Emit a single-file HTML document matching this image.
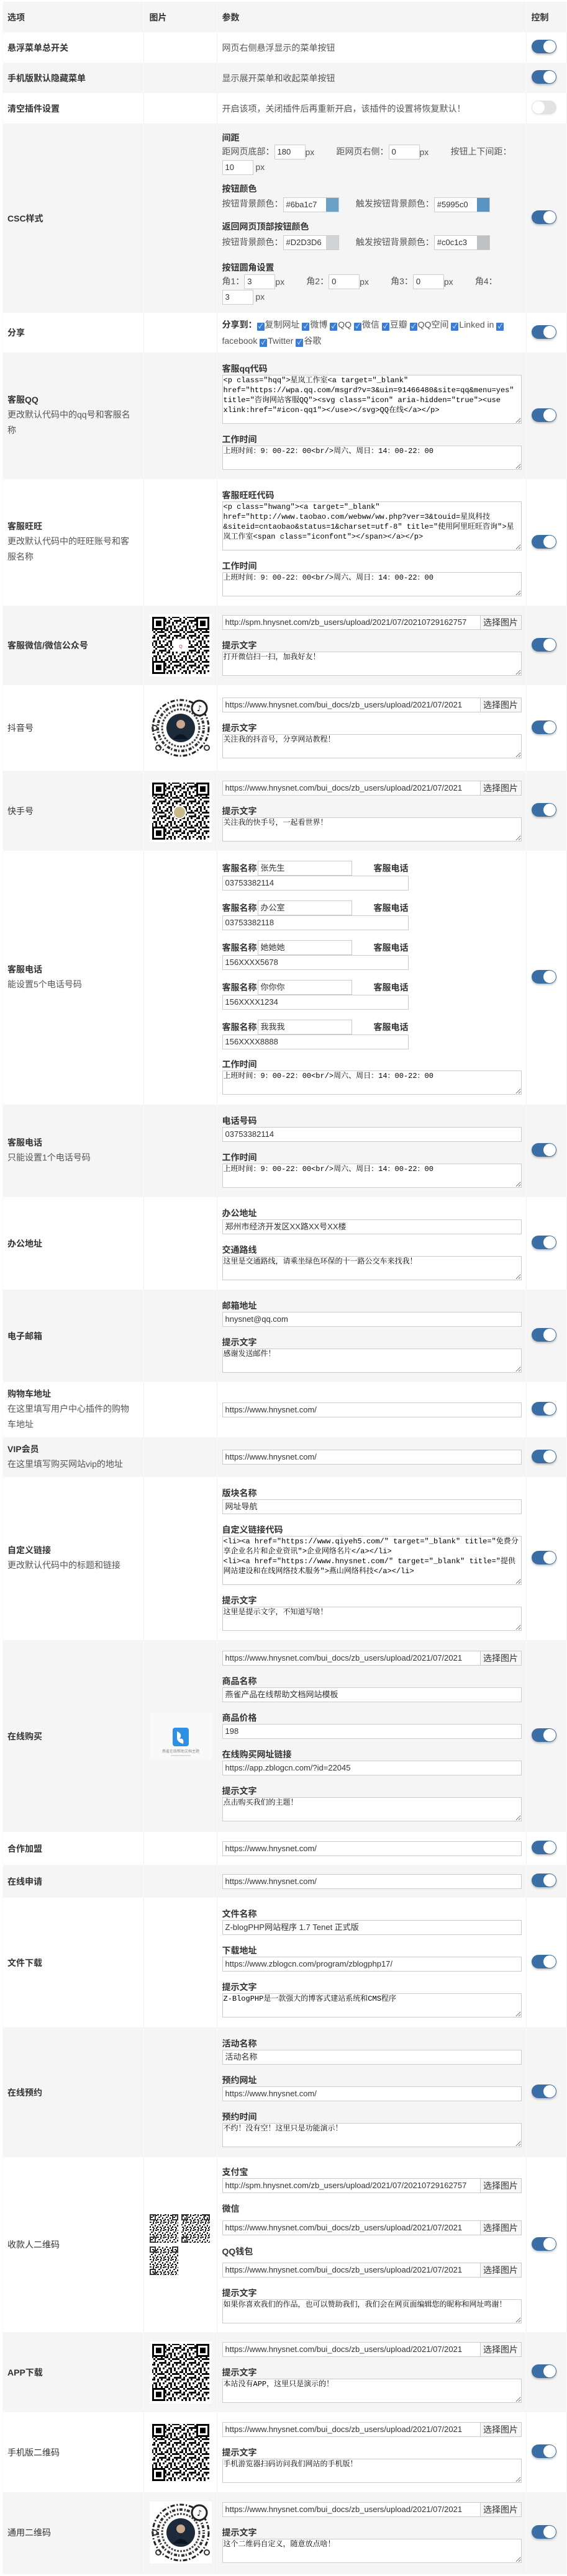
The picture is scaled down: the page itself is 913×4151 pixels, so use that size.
<!DOCTYPE html>
<html><head><meta charset="utf-8">
<style>
*{box-sizing:border-box}
body{margin:0;width:913px;height:4151px;background:#fff;font-family:"Liberation Sans","Noto Sans CJK SC",sans-serif;font-size:14px;color:#555;position:relative}
table{position:absolute;left:5px;top:3px;width:907px;border-collapse:collapse;table-layout:fixed;box-shadow:0 1px 2px rgba(0,0,0,.08)}
td,th{vertical-align:middle;padding:0;border-right:1px solid #f0f0f0}
tr.g td,tr.g th{background:#f5f5f5;border-right-color:#fafafa}
th{text-align:left;font-weight:bold;color:#333;font-size:14px}
td.l{padding:0 14px 0 7px;color:#333}
th.l{padding-left:7px}
td.i,th.i{padding-left:9px}
td.p,th.p{padding:0 7px 0 8px}
td.c,th.c{padding-left:8px}
.t{font-weight:bold;color:#333;line-height:20px}
.d{color:#555;line-height:25px;margin-top:2px}
.h{font-weight:bold;color:#333;line-height:20px;height:20px}
.grp{margin-bottom:15px}
.grp:last-child{margin-bottom:0}
input.f,.f{display:block;width:100%;height:24px;border:1px solid #ccc;padding:0 4px;font:13px "Liberation Sans","Noto Sans CJK SC",sans-serif;color:#333;background:#fff;line-height:22px;white-space:nowrap;overflow:hidden}
textarea{display:block;width:100%;height:39px;border:1px solid #ccc;padding:0 1px;font:12px/16px "Liberation Mono","Noto Serif CJK SC",monospace;color:#000;background:#fff;resize:vertical;overflow:hidden}
textarea.big{height:79px}
.up{display:flex;height:24px}
.up .f{flex:1;border-right:none}
.up .b{width:67px;height:24px;border:1px solid #ccc;background:#f7f7f7;color:#333;font-size:14px;line-height:22px;text-align:center}
.sw{display:inline-block;width:40px;height:22px;border-radius:11px;background:#3a6ea5;position:relative;box-shadow:0 2px 3px rgba(0,0,0,.25)}
.sw::after{content:"";position:absolute;right:1px;top:1px;width:20px;height:20px;border-radius:50%;background:#fff}
.sw.off{background:#e2e2e2;box-shadow:0 1px 2px rgba(0,0,0,.1)}
.sw.off::after{right:auto;left:1px}
.ln{line-height:24px;white-space:nowrap}
.si{display:inline-block;vertical-align:middle;width:50px;height:24px;border:1px solid #ccc;background:#fff;font-size:13px;color:#333;padding:0 4px;line-height:22px}
.px{display:inline-block;width:50px;vertical-align:middle}
.ci{display:inline-block;vertical-align:middle;width:90px;height:24px;border:1px solid #ccc;background:#fff;font-size:13px;color:#333;padding:0 4px;line-height:22px;position:relative}
.ci i{position:absolute;right:0;top:0;width:20px;height:22px}
.cb{display:inline-block;width:12px;height:13px;background:#3a7bd5;color:#fff;font-size:10px;line-height:13px;text-align:center;border-radius:1px;vertical-align:-1px;margin-right:1px}
.ph{width:300px;margin-bottom:16px}
.ph .r{display:flex;height:24px;align-items:center}
.ph .r b{color:#333;width:57px}
.ph .r span.n{width:152px;height:24px;border:1px solid #ccc;background:#fff;font-size:13px;color:#333;padding:0 4px;line-height:22px}
.ph .r b.e{width:auto;margin-left:auto}
.img{background:#fff;display:block}
</style></head><body>
<svg width="0" height="0" style="position:absolute"><defs>
<pattern id="q" width="24" height="24" patternUnits="userSpaceOnUse"><path d="M0 0h6v3H0zM9 0h3v3H9zM18 0h3v6h-3zM6 3h3v3H6zM12 3h6v3h-6zM21 3h3v3h-3zM0 6h3v6H0zM9 6h3v3H9zM15 9h6v3h-6zM3 12h6v3H3zM12 12h3v6h-3zM18 12h3v3h-3zM0 15h3v3H0zM6 18h6v3H6zM15 18h3v6h-3zM21 18h3v3h-3zM3 21h3v3H3zM9 21h3v3H9zM6 9h3v3H6zM21 9h3v3h-3z" fill="#111"/></pattern>
<pattern id="qs" width="12" height="12" patternUnits="userSpaceOnUse"><path d="M0 0h3v2H0zM5 0h2v4H5zM9 1h3v2H9zM2 4h3v2H2zM8 5h2v3H8zM0 7h2v3H0zM4 8h3v2H4zM10 9h2v3h-2zM6 10h2v2H6z" fill="#222"/></pattern>
</defs></svg>
<table>
<colgroup><col style="width:226px"><col style="width:118px"><col style="width:498px"><col style="width:65px"></colgroup>
<tr class="g" style="height:49px"><th class="l">选项</th><th class="i">图片</th><th class="p">参数</th><th class="c">控制</th></tr>
<tr style="height:49px"><td class="l"><div class="t">悬浮菜单总开关</div></td><td class="i"></td><td class="p">网页右侧悬浮显示的菜单按钮</td><td class="c"><span class="sw"></span></td></tr>
<tr class="g" style="height:49px"><td class="l"><div class="t">手机版默认隐藏菜单</div></td><td class="i"></td><td class="p">显示展开菜单和收起菜单按钮</td><td class="c"><span class="sw"></span></td></tr>
<tr style="height:49px"><td class="l"><div class="t">清空插件设置</div></td><td class="i"></td><td class="p">开启该项，关闭插件后再重新开启，该插件的设置将恢复默认！</td><td class="c"><span class="sw off"></span></td></tr>
<tr class="g" style="height:305px"><td class="l"><div class="t">CSC样式</div></td><td class="i"></td><td class="p">
<div class="grp" style="margin-bottom:12px"><div class="h">间距</div>
<div class="ln">距网页底部：<span class="si">180</span><span class="px"> px</span>距网页右侧：<span class="si">0</span><span class="px"> px</span>按钮上下间距：</div>
<div class="ln"><span class="si">10</span> px</div></div>
<div class="grp" style="margin-bottom:13px"><div class="h">按钮颜色</div>
<div class="ln" style="margin-top:2px">按钮背景颜色：<span class="ci">#6ba1c7<i style="background:#6ba1c7"></i></span>&nbsp;&nbsp;&nbsp;&nbsp;&nbsp;&nbsp;&nbsp;触发按钮背景颜色：<span class="ci">#5995c0<i style="background:#5995c0"></i></span></div></div>
<div class="grp" style="margin-bottom:18px"><div class="h">返回网页顶部按钮颜色</div>
<div class="ln" style="margin-top:3px">按钮背景颜色：<span class="ci">#D2D3D6<i style="background:#D2D3D6"></i></span>&nbsp;&nbsp;&nbsp;&nbsp;&nbsp;&nbsp;&nbsp;触发按钮背景颜色：<span class="ci">#c0c1c3<i style="background:#c0c1c3"></i></span></div></div>
<div class="grp"><div class="h">按钮圆角设置</div>
<div class="ln">角1：<span class="si">3</span><span class="px"> px</span>角2：<span class="si">0</span><span class="px"> px</span>角3：<span class="si">0</span><span class="px"> px</span>角4：</div>
<div class="ln"><span class="si">3</span> px</div></div>
</td><td class="c"><span class="sw"></span></td></tr>
<tr style="height:64px"><td class="l"><div class="t">分享</div></td><td class="i"></td><td class="p" style="line-height:26px"><b style="color:#333">分享到：</b><span class="cb">✓</span>复制网址 <span class="cb">✓</span>微博 <span class="cb">✓</span>QQ <span class="cb">✓</span>微信 <span class="cb">✓</span>豆瓣 <span class="cb">✓</span>QQ空间 <span class="cb">✓</span>Linked in <span class="cb">✓</span><br>facebook <span class="cb">✓</span>Twitter <span class="cb">✓</span>谷歌</td><td class="c"><span class="sw"></span></td></tr>
<tr class="g" style="height:204px"><td class="l"><div class="t">客服QQ</div><div class="d">更改默认代码中的qq号和客服名称</div></td><td class="i"></td><td class="p">
<div class="grp"><div class="h">客服qq代码</div><textarea class="big">&lt;p class="hqq"&gt;星岚工作室&lt;a target="_blank" href="https://wpa.qq.com/msgrd?v=3&amp;uin=91466480&amp;site=qq&amp;menu=yes" title="咨询网站客服QQ"&gt;&lt;svg class="icon" aria-hidden="true"&gt;&lt;use xlink:href="#icon-qq1"&gt;&lt;/use&gt;&lt;/svg&gt;QQ在线&lt;/a&gt;&lt;/p&gt;</textarea></div>
<div class="grp"><div class="h">工作时间</div><textarea>上班时间：9：00-22：00&lt;br/&gt;周六、周日：14：00-22：00</textarea></div>
</td><td class="c"><span class="sw"></span></td></tr>
<tr style="height:204px"><td class="l"><div class="t">客服旺旺</div><div class="d">更改默认代码中的旺旺账号和客服名称</div></td><td class="i"></td><td class="p">
<div class="grp"><div class="h">客服旺旺代码</div><textarea class="big">&lt;p class="hwang"&gt;&lt;a target="_blank" href="http://www.taobao.com/webww/ww.php?ver=3&amp;touid=星岚科技&amp;siteid=cntaobao&amp;status=1&amp;charset=utf-8" title="使用阿里旺旺咨询"&gt;星岚工作室&lt;span class="iconfont"&gt;&lt;/span&gt;&lt;/a&gt;&lt;/p&gt;</textarea></div>
<div class="grp"><div class="h">工作时间</div><textarea>上班时间：9：00-22：00&lt;br/&gt;周六、周日：14：00-22：00</textarea></div>
</td><td class="c"><span class="sw"></span></td></tr>
<tr class="g" style="height:128px"><td class="l"><div class="t">客服微信/微信公众号</div></td><td class="i">
<svg class="img" width="100" height="100"><rect width="100" height="100" fill="#fff"/><rect x="4" y="4" width="92" height="92" fill="url(#q)"/><g><rect x="4" y="4" width="21" height="21"/><rect x="7" y="7" width="15" height="15" fill="#fff"/><rect x="10" y="10" width="9" height="9"/><rect x="75" y="4" width="21" height="21"/><rect x="78" y="7" width="15" height="15" fill="#fff"/><rect x="81" y="10" width="9" height="9"/><rect x="4" y="75" width="21" height="21"/><rect x="7" y="78" width="15" height="15" fill="#fff"/><rect x="10" y="81" width="9" height="9"/></g><rect x="38" y="40" width="24" height="20" fill="#fff"/><text x="50" y="54" font-size="7" text-anchor="middle" fill="#c33" font-family="Liberation Sans">Q</text></svg>
</td><td class="p">
<div class="grp"><div class="up"><span class="f">http://spm.hnysnet.com/zb_users/upload/2021/07/20210729162757</span><span class="b">选择图片</span></div></div>
<div class="grp"><div class="h">提示文字</div><textarea>打开微信扫一扫，加我好友！</textarea></div>
</td><td class="c"><span class="sw"></span></td></tr>
<tr style="height:138px"><td class="l"><div class="t" style="font-weight:normal">抖音号</div></td><td class="i">
<svg class="img" width="100" height="100"><rect width="100" height="100" fill="#fff"/><circle cx="50" cy="50" r="45" fill="none" stroke="#222" stroke-width="3" stroke-dasharray="7 3 2 3"/><circle cx="50" cy="50" r="37" fill="none" stroke="#333" stroke-width="4" stroke-dasharray="2 2 5 3"/><circle cx="50" cy="50" r="30" fill="none" stroke="#444" stroke-width="3" stroke-dasharray="3 2"/><circle cx="50" cy="50" r="23" fill="#1d2a3a"/><circle cx="50" cy="44" r="7" fill="#c9a88e"/><path d="M38 68q12-16 24 0z" fill="#0d1520"/><circle cx="80" cy="18" r="12" fill="#fff" stroke="#222" stroke-width="3"/><text x="80" y="23" font-size="13" text-anchor="middle" fill="#111" font-family="DejaVu Sans">♪</text><circle cx="8" cy="50" r="4" fill="none" stroke="#333" stroke-width="2"/><circle cx="92" cy="82" r="4" fill="none" stroke="#333" stroke-width="2"/><circle cx="14" cy="82" r="4" fill="none" stroke="#333" stroke-width="2"/></svg>
</td><td class="p">
<div class="grp"><div class="up"><span class="f">https://www.hnysnet.com/bui_docs/zb_users/upload/2021/07/2021</span><span class="b">选择图片</span></div></div>
<div class="grp"><div class="h">提示文字</div><textarea>关注我的抖音号，分享网站教程！</textarea></div>
</td><td class="c"><span class="sw"></span></td></tr>
<tr class="g" style="height:129px"><td class="l"><div class="t" style="font-weight:normal">快手号</div></td><td class="i">
<svg class="img" width="100" height="100"><rect width="100" height="100" fill="#fff"/><rect x="4" y="4" width="92" height="92" fill="url(#q)"/><rect x="4" y="4" width="21" height="21"/><rect x="7" y="7" width="15" height="15" fill="#fff"/><rect x="10" y="10" width="9" height="9"/><rect x="75" y="4" width="21" height="21"/><rect x="78" y="7" width="15" height="15" fill="#fff"/><rect x="81" y="10" width="9" height="9"/><rect x="4" y="75" width="21" height="21"/><rect x="7" y="78" width="15" height="15" fill="#fff"/><rect x="10" y="81" width="9" height="9"/><circle cx="48" cy="52" r="10" fill="#c8b98a" stroke="#fff" stroke-width="2"/></svg>
</td><td class="p">
<div class="grp"><div class="up"><span class="f">https://www.hnysnet.com/bui_docs/zb_users/upload/2021/07/2021</span><span class="b">选择图片</span></div></div>
<div class="grp"><div class="h">提示文字</div><textarea>关注我的快手号，一起看世界！</textarea></div>
</td><td class="c"><span class="sw"></span></td></tr>
<tr style="height:409px"><td class="l"><div class="t">客服电话</div><div class="d">能设置5个电话号码</div></td><td class="i"></td><td class="p">
<div class="ph"><div class="r"><b>客服名称</b><span class="n">张先生</span><b class="e">客服电话</b></div><span class="f">03753382114</span></div>
<div class="ph"><div class="r"><b>客服名称</b><span class="n">办公室</span><b class="e">客服电话</b></div><span class="f">03753382118</span></div>
<div class="ph"><div class="r"><b>客服名称</b><span class="n">她她她</span><b class="e">客服电话</b></div><span class="f">156XXXX5678</span></div>
<div class="ph"><div class="r"><b>客服名称</b><span class="n">你你你</span><b class="e">客服电话</b></div><span class="f">156XXXX1234</span></div>
<div class="ph" style="margin-bottom:14px"><div class="r"><b>客服名称</b><span class="n">我我我</span><b class="e">客服电话</b></div><span class="f">156XXXX8888</span></div>
<div class="grp"><div class="h">工作时间</div><textarea>上班时间：9：00-22：00&lt;br/&gt;周六、周日：14：00-22：00</textarea></div>
</td><td class="c"><span class="sw"></span></td></tr>
<tr class="g" style="height:149px"><td class="l"><div class="t">客服电话</div><div class="d">只能设置1个电话号码</div></td><td class="i"></td><td class="p">
<div class="grp"><div class="h">电话号码</div><span class="f">03753382114</span></div>
<div class="grp"><div class="h">工作时间</div><textarea>上班时间：9：00-22：00&lt;br/&gt;周六、周日：14：00-22：00</textarea></div>
</td><td class="c"><span class="sw"></span></td></tr>
<tr style="height:149px"><td class="l"><div class="t">办公地址</div></td><td class="i"></td><td class="p">
<div class="grp"><div class="h">办公地址</div><span class="f">郑州市经济开发区XX路XX号XX楼</span></div>
<div class="grp"><div class="h">交通路线</div><textarea>这里是交通路线，请乘坐绿色环保的十一路公交车来找我！</textarea></div>
</td><td class="c"><span class="sw"></span></td></tr>
<tr class="g" style="height:149px"><td class="l"><div class="t">电子邮箱</div></td><td class="i"></td><td class="p">
<div class="grp"><div class="h">邮箱地址</div><span class="f">hnysnet@qq.com</span></div>
<div class="grp"><div class="h">提示文字</div><textarea>感谢发送邮件！</textarea></div>
</td><td class="c"><span class="sw"></span></td></tr>
<tr style="height:89px"><td class="l"><div class="t">购物车地址</div><div class="d">在这里填写用户中心插件的购物车地址</div></td><td class="i"></td><td class="p"><span class="f">https://www.hnysnet.com/</span></td><td class="c"><span class="sw"></span></td></tr>
<tr class="g" style="height:64px"><td class="l"><div class="t">VIP会员</div><div class="d">在这里填写购买网站vip的地址</div></td><td class="i"></td><td class="p"><span class="f">https://www.hnysnet.com/</span></td><td class="c"><span class="sw"></span></td></tr>
<tr style="height:263px"><td class="l"><div class="t">自定义链接</div><div class="d">更改默认代码中的标题和链接</div></td><td class="i"></td><td class="p">
<div class="grp"><div class="h">版块名称</div><span class="f">网址导航</span></div>
<div class="grp"><div class="h">自定义链接代码</div><textarea class="big">&lt;li&gt;&lt;a href="https://www.qiyeh5.com/" target="_blank" title="免费分享企业名片和企业资讯"&gt;企业网络名片&lt;/a&gt;&lt;/li&gt;
&lt;li&gt;&lt;a href="https://www.hnysnet.com/" target="_blank" title="提供网站建设和在线网络技术服务"&gt;燕山网络科技&lt;/a&gt;&lt;/li&gt;</textarea></div>
<div class="grp"><div class="h">提示文字</div><textarea>这里是提示文字，不知道写啥！</textarea></div>
</td><td class="c"><span class="sw"></span></td></tr>
<tr class="g" style="height:309px"><td class="l"><div class="t">在线购买</div></td><td class="i">
<svg class="img" width="100" height="76" style="background:#f8f8f8"><rect width="100" height="76" fill="#f9f9f9"/><rect x="37" y="24" width="26" height="30" rx="4" fill="#2f8fe0"/><path d="M44 30q10 4 4 12q8-2 6 8q-8-2-10-8z" fill="#fff"/><text x="50" y="64" font-size="6" text-anchor="middle" fill="#888" font-family="Noto Sans CJK SC">燕雀在线帮助文档主题</text><rect x="34" y="68" width="32" height="2" fill="#ddd"/></svg>
</td><td class="p">
<div class="grp"><div class="up"><span class="f">https://www.hnysnet.com/bui_docs/zb_users/upload/2021/07/2021</span><span class="b">选择图片</span></div></div>
<div class="grp"><div class="h">商品名称</div><span class="f">燕雀产品在线帮助文档网站模板</span></div>
<div class="grp"><div class="h">商品价格</div><span class="f">198</span></div>
<div class="grp"><div class="h">在线购买网址链接</div><span class="f">https://app.zblogcn.com/?id=22045</span></div>
<div class="grp"><div class="h">提示文字</div><textarea>点击购买我们的主题！</textarea></div>
</td><td class="c"><span class="sw"></span></td></tr>
<tr style="height:53px"><td class="l"><div class="t">合作加盟</div></td><td class="i"></td><td class="p"><span class="f">https://www.hnysnet.com/</span></td><td class="c"><span class="sw"></span></td></tr>
<tr class="g" style="height:53px"><td class="l"><div class="t">在线申请</div></td><td class="i"></td><td class="p"><span class="f">https://www.hnysnet.com/</span></td><td class="c"><span class="sw"></span></td></tr>
<tr style="height:209px"><td class="l"><div class="t">文件下载</div></td><td class="i"></td><td class="p">
<div class="grp"><div class="h">文件名称</div><span class="f">Z-blogPHP网站程序 1.7 Tenet 正式版</span></div>
<div class="grp"><div class="h">下载地址</div><span class="f">https://www.zblogcn.com/program/zblogphp17/</span></div>
<div class="grp"><div class="h">提示文字</div><textarea>Z-BlogPHP是一款强大的博客式建站系统和CMS程序</textarea></div>
</td><td class="c"><span class="sw"></span></td></tr>
<tr class="g" style="height:209px"><td class="l"><div class="t">在线预约</div></td><td class="i"></td><td class="p">
<div class="grp"><div class="h">活动名称</div><span class="f">活动名称</span></div>
<div class="grp"><div class="h">预约网址</div><span class="f">https://www.hnysnet.com/</span></div>
<div class="grp"><div class="h">预约时间</div><textarea>不约！没有空！这里只是功能演示！</textarea></div>
</td><td class="c"><span class="sw"></span></td></tr>
<tr style="height:282px"><td class="l"><div class="t" style="font-weight:normal">收款人二维码</div></td><td class="i">
<svg class="img" width="100" height="98"><rect x="0" y="0" width="46" height="46" fill="url(#qs)"/><rect x="51" y="0" width="46" height="46" fill="url(#qs)"/><rect x="0" y="52" width="46" height="46" fill="url(#qs)"/><g fill="none" stroke="#333" stroke-width="2"><rect x="1" y="1" width="8" height="8"/><rect x="37" y="1" width="8" height="8"/><rect x="1" y="37" width="8" height="8"/><rect x="52" y="1" width="8" height="8"/><rect x="88" y="1" width="8" height="8"/><rect x="52" y="37" width="8" height="8"/><rect x="1" y="53" width="8" height="8"/><rect x="37" y="53" width="8" height="8"/><rect x="1" y="89" width="8" height="8"/></g></svg>
</td><td class="p">
<div class="grp" style="margin-bottom:12px"><div class="h">支付宝</div><div class="up"><span class="f">http://spm.hnysnet.com/zb_users/upload/2021/07/20210729162757</span><span class="b">选择图片</span></div></div>
<div class="grp" style="margin-bottom:12px"><div class="h" style="height:32px;line-height:26px">微信</div><div class="up"><span class="f">https://www.hnysnet.com/bui_docs/zb_users/upload/2021/07/2021</span><span class="b">选择图片</span></div></div>
<div class="grp" style="margin-bottom:15px"><div class="h" style="height:32px;line-height:28px">QQ钱包</div><div class="up"><span class="f">https://www.hnysnet.com/bui_docs/zb_users/upload/2021/07/2021</span><span class="b">选择图片</span></div></div>
<div class="grp"><div class="h">提示文字</div><textarea>如果你喜欢我们的作品，也可以赞助我们，我们会在网页面编辑您的昵称和网址鸣谢！</textarea></div>
</td><td class="c"><span class="sw"></span></td></tr>
<tr class="g" style="height:129px"><td class="l"><div class="t">APP下载</div></td><td class="i">
<svg class="img" width="100" height="100"><rect width="100" height="100" fill="#fff"/><rect x="4" y="4" width="92" height="92" fill="url(#q)"/><rect x="4" y="4" width="21" height="21"/><rect x="7" y="7" width="15" height="15" fill="#fff"/><rect x="10" y="10" width="9" height="9"/><rect x="75" y="4" width="21" height="21"/><rect x="78" y="7" width="15" height="15" fill="#fff"/><rect x="81" y="10" width="9" height="9"/><rect x="4" y="75" width="21" height="21"/><rect x="7" y="78" width="15" height="15" fill="#fff"/><rect x="10" y="81" width="9" height="9"/></svg>
</td><td class="p">
<div class="grp"><div class="up"><span class="f">https://www.hnysnet.com/bui_docs/zb_users/upload/2021/07/2021</span><span class="b">选择图片</span></div></div>
<div class="grp"><div class="h">提示文字</div><textarea>本站没有APP，这里只是演示的！</textarea></div>
</td><td class="c"><span class="sw"></span></td></tr>
<tr style="height:129px"><td class="l"><div class="t" style="font-weight:normal">手机版二维码</div></td><td class="i">
<svg class="img" width="100" height="100"><rect width="100" height="100" fill="#fff"/><rect x="4" y="4" width="92" height="92" fill="url(#q)"/><rect x="4" y="4" width="21" height="21"/><rect x="7" y="7" width="15" height="15" fill="#fff"/><rect x="10" y="10" width="9" height="9"/><rect x="75" y="4" width="21" height="21"/><rect x="78" y="7" width="15" height="15" fill="#fff"/><rect x="81" y="10" width="9" height="9"/><rect x="4" y="75" width="21" height="21"/><rect x="7" y="78" width="15" height="15" fill="#fff"/><rect x="10" y="81" width="9" height="9"/></svg>
</td><td class="p">
<div class="grp"><div class="up"><span class="f">https://www.hnysnet.com/bui_docs/zb_users/upload/2021/07/2021</span><span class="b">选择图片</span></div></div>
<div class="grp"><div class="h">提示文字</div><textarea>手机游览器扫码访问我们网站的手机版！</textarea></div>
</td><td class="c"><span class="sw"></span></td></tr>
<tr class="g" style="height:130px"><td class="l"><div class="t" style="font-weight:normal">通用二维码</div></td><td class="i">
<svg class="img" width="100" height="100"><rect width="100" height="100" fill="#fff"/><circle cx="50" cy="50" r="45" fill="none" stroke="#222" stroke-width="3" stroke-dasharray="7 3 2 3"/><circle cx="50" cy="50" r="37" fill="none" stroke="#333" stroke-width="4" stroke-dasharray="2 2 5 3"/><circle cx="50" cy="50" r="30" fill="none" stroke="#444" stroke-width="3" stroke-dasharray="3 2"/><circle cx="50" cy="50" r="23" fill="#1d2a3a"/><circle cx="50" cy="44" r="7" fill="#c9a88e"/><path d="M38 68q12-16 24 0z" fill="#0d1520"/><circle cx="80" cy="18" r="12" fill="#fff" stroke="#222" stroke-width="3"/><text x="80" y="23" font-size="13" text-anchor="middle" fill="#111" font-family="DejaVu Sans">♪</text><circle cx="8" cy="50" r="4" fill="none" stroke="#333" stroke-width="2"/><circle cx="92" cy="82" r="4" fill="none" stroke="#333" stroke-width="2"/><circle cx="14" cy="82" r="4" fill="none" stroke="#333" stroke-width="2"/></svg>
</td><td class="p">
<div class="grp"><div class="up"><span class="f">https://www.hnysnet.com/bui_docs/zb_users/upload/2021/07/2021</span><span class="b">选择图片</span></div></div>
<div class="grp"><div class="h">提示文字</div><textarea>这个二维码自定义，随意放点啥！</textarea></div>
</td><td class="c"><span class="sw"></span></td></tr>
</table>
</body></html>
